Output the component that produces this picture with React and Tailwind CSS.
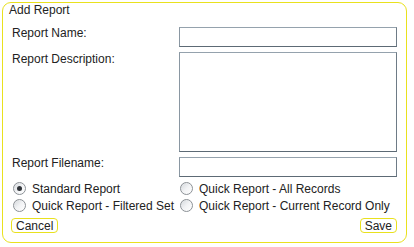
import React, { useState } from 'react';

const font = { fontFamily: '"Liberation Sans", Arial, sans-serif' };

function Radio({ checked, label, onClick }) {
  return (
    <label onClick={onClick} className="flex items-center h-[17px] cursor-pointer">
      <span className="w-[13px] h-[13px] rounded-full border border-[#8c9196] bg-gradient-to-br from-[#d3d7db] via-[#f2f3f5] to-white shadow-[inset_0_0_1px_#fff] flex items-center justify-center shrink-0">
        {checked ? <span className="w-[5px] h-[5px] rounded-full bg-[#2f3338]" /> : null}
      </span>
      <span className="ml-[6px] whitespace-nowrap">{label}</span>
    </label>
  );
}

export default function App() {
  const [type, setType] = useState('standard');

  const inputCls =
    'block w-[218px] border border-[#95a2ad] border-b-[#5d6a75] border-l-[#8a97a2] border-r-[#6e7b86] bg-white outline-none px-1 text-[12px]';
  const btnCls = 'h-[15px] px-[4px] leading-[12px] border border-[#e9e11e] rounded-[4px] bg-white text-[12px]';

  return (
    <div className="w-[414px] h-[247px] bg-white text-[12px] text-[#222]" style={font}>
      <div className="absolute left-[2px] top-[2px] w-[405px] h-[241px] border border-[#e9e11e] rounded-[9px]" />
      <div className="relative pl-[9px] pt-[2px] w-[407px]">
        <div className="leading-[14px] mt-[1px]">Add Report</div>

        {/* form fields */}
        <div className="mt-[10px] grid grid-cols-[167px_218px] gap-y-[5px] pl-[3px] items-start">
          <div className="leading-[14px] -mt-[1px]">Report Name:</div>
          <input className={inputCls + ' h-[20px]'} />
          <div className="leading-[14px]">Report Description:</div>
          <textarea className={inputCls + ' h-[100px] resize-none'} />
          <div className="leading-[14px] -mt-[1px]">Report Filename:</div>
          <input className={inputCls + ' h-[20px]'} />
        </div>

        {/* report type */}
        <div className="mt-[3px] ml-[4px] grid grid-cols-[167px_220px] leading-[14px]">
          <Radio checked={type === 'standard'} label="Standard Report" onClick={() => setType('standard')} />
          <Radio checked={type === 'all'} label="Quick Report - All Records" onClick={() => setType('all')} />
          <Radio checked={type === 'filtered'} label="Quick Report - Filtered Set" onClick={() => setType('filtered')} />
          <Radio checked={type === 'current'} label="Quick Report - Current Record Only" onClick={() => setType('current')} />
        </div>

        {/* buttons */}
        <div className="mt-[4px] ml-[2px] w-[386px] flex justify-between">
          <button className={btnCls}>Cancel</button>
          <button className={btnCls}>Save</button>
        </div>
      </div>
    </div>
  );
}
